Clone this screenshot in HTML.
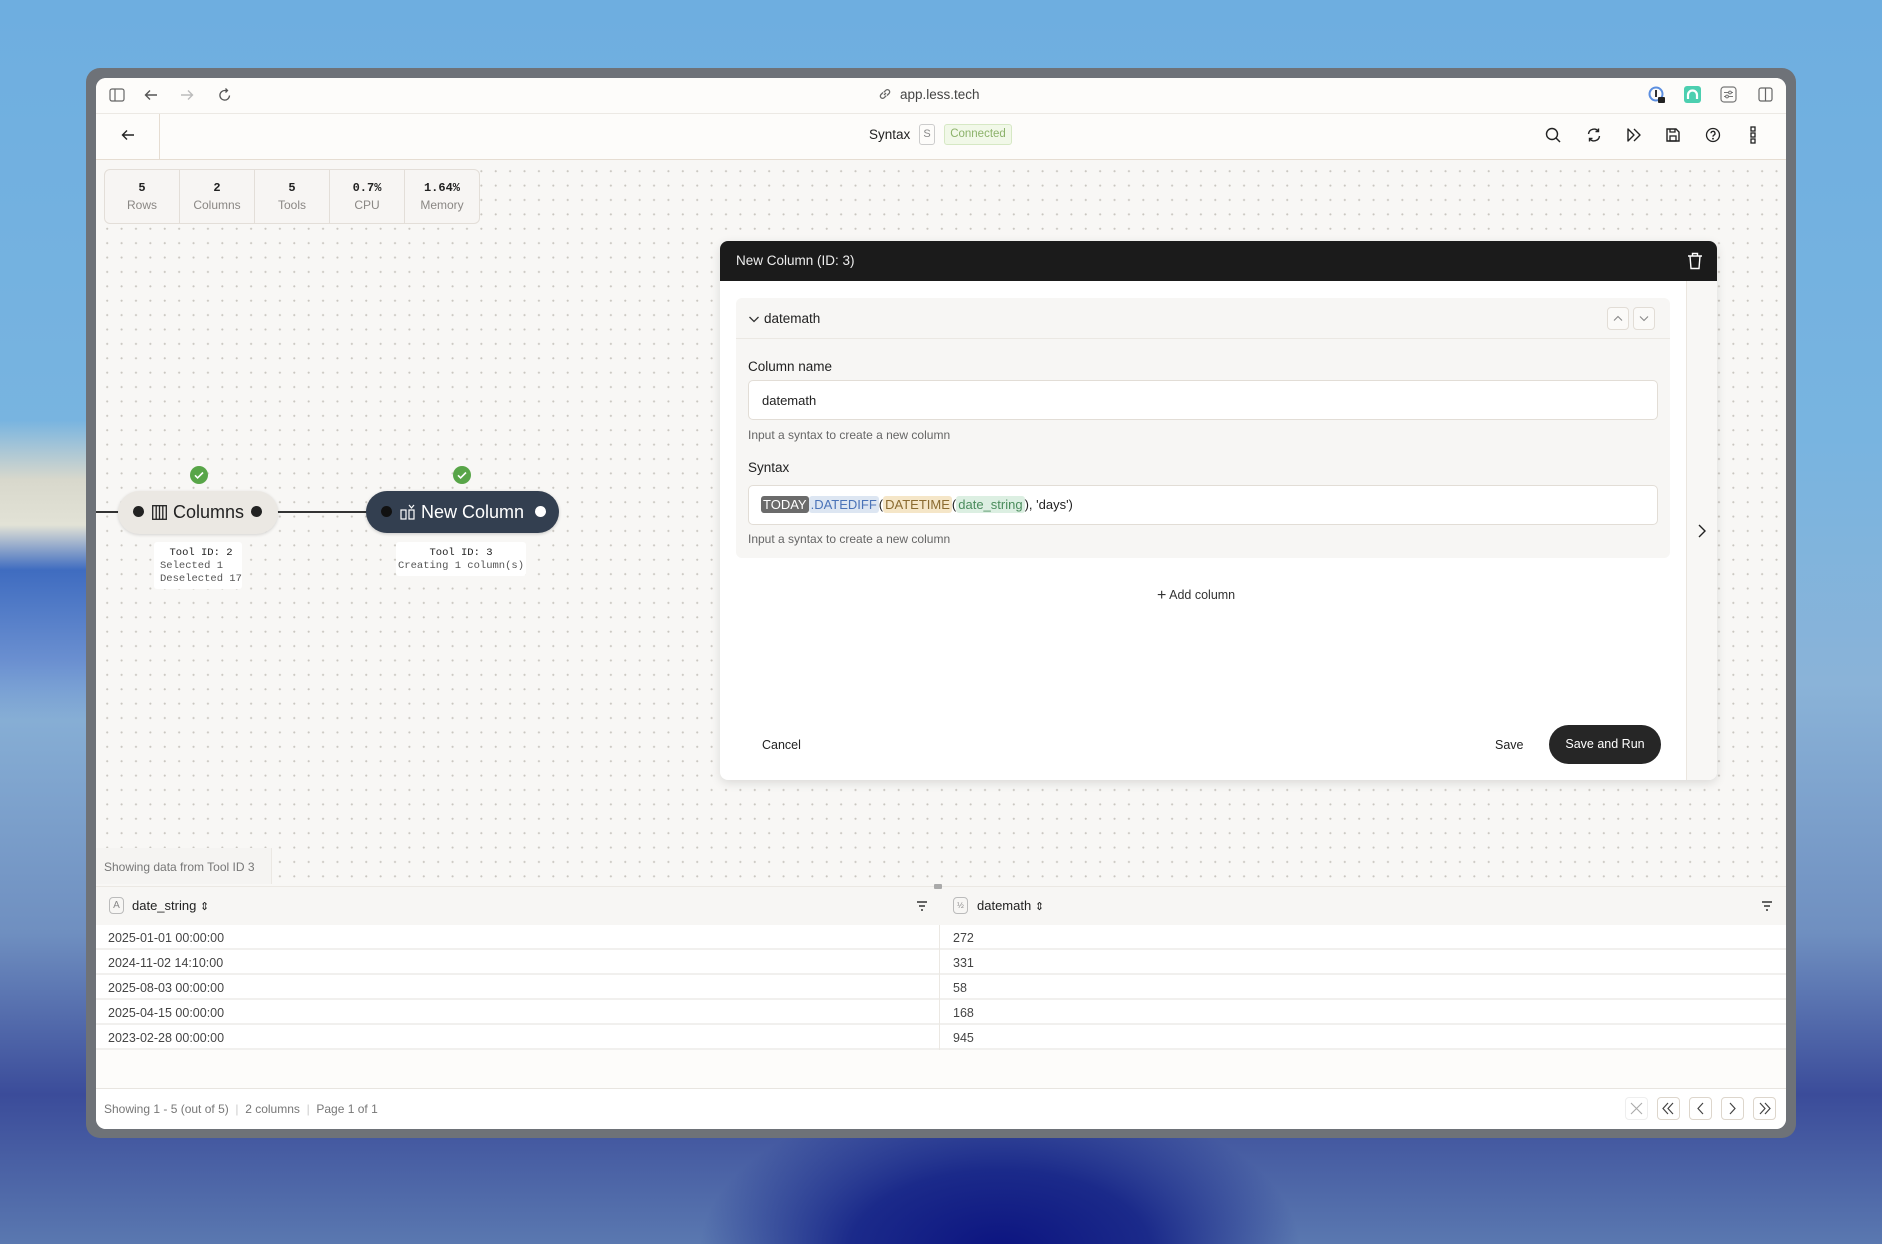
<!DOCTYPE html>
<html><head><meta charset="utf-8"><style>
*{box-sizing:border-box;margin:0;padding:0}
body{width:1882px;height:1244px;overflow:hidden;font-family:"Liberation Sans",sans-serif;position:relative;
background:linear-gradient(180deg,#6eaee0 0%,#78b4e0 35%,#8ab3d8 55%,#6f8fc0 75%,#3b4c9a 88%,#5a78b0 100%)}
.bgb{position:absolute;left:0;top:1100px;width:1882px;height:144px;background:radial-gradient(ellipse 300px 160px at 1000px 150px,#0c1480 0%,#1b2a8a 50%,rgba(80,110,170,0) 100%)}
.bgl{position:absolute;left:0;top:420px;width:100px;height:300px;background:linear-gradient(180deg,rgba(200,210,220,0) 0%,#d8d8cc 20%,#e2e2d6 35%,#3f6cc0 50%,#6a8fd0 80%,rgba(110,150,210,0) 100%)}
.frame{position:absolute;left:86px;top:68px;width:1710px;height:1070px;background:#6e7278;border-radius:14px}
.win{position:absolute;left:96px;top:78px;width:1690px;height:1051px;background:#fdfcfa;border-radius:10px;overflow:hidden}
.abs{position:absolute}
.canvas{position:absolute;left:0;top:82px;width:1690px;height:806px;background-color:#f8f7f5;
background-image:radial-gradient(circle,#c9c6c0 0.9px,transparent 1.2px);background-size:14.4px 14.4px;background-position:4px 4px}
.tb{border-bottom:1px solid #ece9e4}
svg{display:block}
.ic{position:absolute}
.stats{position:absolute;left:8px;top:91px;width:376px;height:55px;border:1px solid #e3ded8;border-radius:6px;background:#f7f5f3;display:flex}
.stats div{flex:1;border-right:1px solid #e3ded8;text-align:center;padding-top:11px}
.stats div:last-child{border-right:none}
.stats b{display:block;font-family:"Liberation Mono",monospace;font-size:12px;color:#222}
.stats span{display:block;font-size:12px;color:#8a8784;margin-top:3px}
.mono{font-family:"Liberation Mono",monospace}
.panel{position:absolute;left:624px;top:163px;width:997px;height:539px;background:#fff;border-radius:8px;box-shadow:0 3px 10px rgba(0,0,0,.12);overflow:hidden}
.inp{position:absolute;background:#fff;border:1px solid #e2ddd6;border-radius:5px;font-size:13px;color:#222}
.tok{padding:1px 2px;border-radius:3px}
.row{position:absolute;left:0;width:1690px;height:25px;border-bottom:2px solid #f1f0ee;background:#fff;font-size:12.5px;color:#444}
.row span{position:absolute;top:6px}
.pbtn{position:absolute;top:1019px;width:23px;height:23px;border:1px solid #ddd6cc;border-radius:4px;background:#fff}
</style></head><body>
<div class="bgl"></div><div class="bgb"></div>
<div class="frame"></div>
<div class="win">
  <div class="abs tb" style="left:0;top:0;width:1690px;height:36px;background:#fdfcfa"></div>
  <svg class="ic" style="left:13px;top:10px" width="16" height="14" viewBox="0 0 16 14"><rect x="1" y="1" width="14" height="12" rx="2" fill="none" stroke="#666" stroke-width="1.2"/><line x1="6" y1="1" x2="6" y2="13" stroke="#666" stroke-width="1.2"/></svg>
  <svg class="ic" style="left:48px;top:10px" width="14" height="14" viewBox="0 0 14 14"><path d="M13 7H2M6 2.5L1.5 7 6 11.5" fill="none" stroke="#555" stroke-width="1.4"/></svg>
  <svg class="ic" style="left:84px;top:10px" width="14" height="14" viewBox="0 0 14 14"><path d="M1 7h11M8 2.5L12.5 7 8 11.5" fill="none" stroke="#bbb" stroke-width="1.4"/></svg>
  <svg class="ic" style="left:122px;top:9px" width="14" height="16" viewBox="0 0 14 16"><path d="M11.5 8.5A4.8 4.8 0 1 1 7 3.5h2M7.5 1.5L9.5 3.5 7.5 5.5" fill="none" stroke="#555" stroke-width="1.3"/></svg>
  <svg class="ic" style="left:782px;top:9px" width="14" height="14" viewBox="0 0 14 14"><path d="M6 8l2-2M5 5.5L3 7.5a2.2 2.2 0 0 0 3.2 3.2L8.2 8.7M9 8.5l2-2a2.2 2.2 0 0 0-3.2-3.2L5.8 5.3" fill="none" stroke="#666" stroke-width="1.3"/></svg>
  <div class="abs" style="left:804px;top:9px;font-size:13.5px;color:#444">app.less.tech</div>
  <svg class="ic" style="left:1552px;top:8px" width="18" height="18" viewBox="0 0 18 18"><circle cx="8" cy="8" r="6.5" fill="none" stroke="#5c8fe0" stroke-width="2"/><rect x="7" y="4" width="2" height="7" fill="#333"/><rect x="10" y="11" width="7" height="6" rx="1" fill="#222"/></svg>
  <div class="abs" style="left:1588px;top:8px;width:17px;height:17px;background:#4ccfb0;border-radius:3px"><svg width="17" height="17" viewBox="0 0 17 17"><path d="M4 13V9a4.5 4.5 0 0 1 9 0v4" fill="none" stroke="#fff" stroke-width="2.2"/></svg></div>
  <svg class="ic" style="left:1624px;top:8px" width="17" height="17" viewBox="0 0 17 17"><rect x="1" y="1" width="15" height="15" rx="3" fill="none" stroke="#777" stroke-width="1.2"/><path d="M4 6.5h9M4 10.5h9" stroke="#777" stroke-width="1.1"/><circle cx="10" cy="6.5" r="1.4" fill="#fff" stroke="#777"/><circle cx="7" cy="10.5" r="1.4" fill="#fff" stroke="#777"/></svg>
  <svg class="ic" style="left:1662px;top:9px" width="15" height="15" viewBox="0 0 15 15"><rect x="1" y="1" width="13" height="13" rx="2" fill="none" stroke="#666" stroke-width="1.2"/><line x1="7.5" y1="1" x2="7.5" y2="14" stroke="#666" stroke-width="1.2"/></svg>
  <div class="abs" style="left:0;top:36px;width:1690px;height:46px;border-bottom:1px solid #e6ddd2;background:#fdfcfa"></div>
  <div class="abs" style="left:63px;top:36px;width:1px;height:46px;background:#e6ddd2"></div>
  <svg class="ic" style="left:25px;top:50px" width="14" height="14" viewBox="0 0 14 14"><path d="M13 7H2M6 2.5L1.5 7 6 11.5" fill="none" stroke="#222" stroke-width="1.4"/></svg>
  <div class="abs" style="left:773px;top:49px;font-size:13.5px;color:#222">Syntax</div>
  <div class="abs" style="left:823px;top:46px;width:16px;height:21px;border:1px solid #ccc;border-radius:3px;font-size:11px;color:#888;text-align:center;line-height:19px">S</div>
  <div class="abs" style="left:848px;top:46px;width:68px;height:21px;border:1px solid #d6e8c4;border-radius:3px;background:#f1f8e8;font-size:11.5px;color:#8cb26a;text-align:center;line-height:19px">Connected</div>
  <svg class="ic" style="left:1449px;top:49px" width="16" height="16" viewBox="0 0 16 16"><circle cx="7" cy="7" r="5.5" fill="none" stroke="#222" stroke-width="1.4"/><path d="M11 11l4 4" stroke="#222" stroke-width="1.5"/></svg>
  <svg class="ic" style="left:1490px;top:49px" width="16" height="16" viewBox="0 0 16 16"><path d="M2.5 7A5.5 5.5 0 0 1 12.5 4.5M13.5 9A5.5 5.5 0 0 1 3.5 11.5M12.5 1.5v3h-3M3.5 14.5v-3h3" fill="none" stroke="#222" stroke-width="1.4"/></svg>
  <svg class="ic" style="left:1530px;top:49px" width="16" height="16" viewBox="0 0 16 16"><path d="M2 2v12l6-6zM8 2l6 6-6 6" fill="none" stroke="#222" stroke-width="1.4" stroke-linejoin="round"/></svg>
  <svg class="ic" style="left:1569px;top:49px" width="16" height="16" viewBox="0 0 16 16"><path d="M2 2h9l3 3v9H2z" fill="none" stroke="#222" stroke-width="1.4"/><rect x="5" y="9" width="6" height="5" fill="none" stroke="#222" stroke-width="1.3"/><path d="M5 2v3h5V2" fill="none" stroke="#222" stroke-width="1.3"/></svg>
  <svg class="ic" style="left:1609px;top:49px" width="16" height="16" viewBox="0 0 16 16"><circle cx="8" cy="8" r="6.5" fill="none" stroke="#222" stroke-width="1.3"/><path d="M6 6.3a2 2 0 1 1 2.7 1.9C8 8.5 8 9 8 9.7" fill="none" stroke="#222" stroke-width="1.3"/><circle cx="8" cy="11.7" r=".9" fill="#222"/></svg>
  <svg class="ic" style="left:1654px;top:48px" width="6" height="18" viewBox="0 0 6 18"><rect x="1" y="1" width="4" height="4" fill="none" stroke="#222" stroke-width="1.3"/><rect x="1" y="7" width="4" height="4" fill="none" stroke="#222" stroke-width="1.3"/><rect x="1" y="13" width="4" height="4" fill="none" stroke="#222" stroke-width="1.3"/></svg>

  <div class="canvas"></div>
  <div class="stats"><div><b>5</b><span>Rows</span></div><div><b>2</b><span>Columns</span></div><div><b>5</b><span>Tools</span></div><div><b>0.7%</b><span>CPU</span></div><div><b>1.64%</b><span>Memory</span></div></div>

  <div class="abs" style="left:0;top:433px;width:290px;height:2px;background:#333"></div>
  <div class="abs" style="left:22px;top:413px;width:160px;height:43px;border-radius:22px;background:#ebe8e3;box-shadow:0 1px 3px rgba(0,0,0,.15)"></div>
  <div class="abs" style="left:37px;top:428px;width:11px;height:11px;border-radius:50%;background:#222"></div>
  <div class="abs" style="left:155px;top:428px;width:11px;height:11px;border-radius:50%;background:#222"></div>
  <svg class="ic" style="left:56px;top:427px" width="15" height="15" viewBox="0 0 15 15"><rect x=".7" y=".7" width="13.6" height="13.6" fill="none" stroke="#222" stroke-width="1.3"/><path d="M4.2 1v13M7.5 1v13M10.8 1v13" stroke="#222" stroke-width="1.3"/></svg>
  <div class="abs" style="left:77px;top:424px;font-size:18px;color:#222">Columns</div>
  <div class="abs" style="left:270px;top:413px;width:193px;height:42px;border-radius:21px;background:#333f50;box-shadow:0 1px 3px rgba(0,0,0,.2)"></div>
  <div class="abs" style="left:285px;top:428px;width:11px;height:11px;border-radius:50%;background:#111"></div>
  <div class="abs" style="left:439px;top:428px;width:11px;height:11px;border-radius:50%;background:#fff"></div>
  <svg class="ic" style="left:304px;top:426px" width="16" height="16" viewBox="0 0 16 16"><rect x="1" y="6" width="5" height="9" fill="none" stroke="#fff" stroke-width="1.2"/><rect x="9" y="6" width="5" height="9" fill="none" stroke="#fff" stroke-width="1.2"/><path d="M9 1l2.5 3L14 1" fill="none" stroke="#fff" stroke-width="1.2"/></svg>
  <div class="abs" style="left:325px;top:424px;font-size:18px;color:#fff">New Column</div>
  <div class="abs" style="left:94px;top:388px;width:18px;height:18px;border-radius:50%;background:#58a548"><svg width="18" height="18" viewBox="0 0 18 18"><path d="M5 9.3l2.6 2.6L13 6.5" fill="none" stroke="#fff" stroke-width="1.6"/></svg></div>
  <div class="abs" style="left:357px;top:388px;width:18px;height:18px;border-radius:50%;background:#58a548"><svg width="18" height="18" viewBox="0 0 18 18"><path d="M5 9.3l2.6 2.6L13 6.5" fill="none" stroke="#fff" stroke-width="1.6"/></svg></div>
  <div class="abs mono" style="left:58px;top:464px;width:88px;height:47px;background:#fff;border-radius:3px;font-size:10.5px;color:#555;line-height:13px;padding:5px 0 0 6px"><div style="text-align:center;color:#222">Tool ID: 2</div>Selected 1<br>Deselected 17</div>
  <div class="abs mono" style="left:300px;top:464px;width:130px;height:34px;background:#fff;border-radius:3px;font-size:10.5px;color:#555;line-height:13px;padding-top:5px;text-align:center"><div style="color:#222">Tool ID: 3</div>Creating 1 column(s)</div>

  <div class="panel">
    <div class="abs" style="left:0;top:0;width:997px;height:40px;background:#1b1b1b"></div>
    <div class="abs" style="left:16px;top:12px;font-size:13.5px;color:#eee">New Column (ID: 3)</div>
    <svg class="ic" style="left:967px;top:11px" width="16" height="18" viewBox="0 0 16 18"><path d="M1 4h14M5.5 4V1.5h5V4M3 4l1 12.5h8L13 4" fill="none" stroke="#fff" stroke-width="1.4"/></svg>
    <div class="abs" style="left:966px;top:40px;width:31px;height:499px;background:#f8f7f5;border-left:1px solid #ebe6df"></div>
    <svg class="ic" style="left:977px;top:282px" width="10" height="16" viewBox="0 0 10 16"><path d="M2 2l6 6-6 6" fill="none" stroke="#222" stroke-width="1.4"/></svg>
    <div class="abs" style="left:16px;top:57px;width:934px;height:260px;background:#f7f6f4;border-radius:6px"></div>
    <div class="abs" style="left:16px;top:97px;width:934px;height:1px;background:#ebe8e3"></div>
    <svg class="ic" style="left:28px;top:73px" width="12" height="10" viewBox="0 0 12 10"><path d="M1.5 3l4.5 4.5L10.5 3" fill="none" stroke="#333" stroke-width="1.3"/></svg>
    <div class="abs" style="left:44px;top:70px;font-size:13.5px;color:#222">datemath</div>
    <div class="abs" style="left:887px;top:66px;width:22px;height:23px;border:1px solid #e2ddd6;border-radius:4px;background:#fbfaf8"><svg width="20" height="21" viewBox="0 0 20 21"><path d="M6 12.5l4-4 4 4" fill="none" stroke="#888" stroke-width="1.1"/></svg></div>
    <div class="abs" style="left:913px;top:66px;width:22px;height:23px;border:1px solid #e2ddd6;border-radius:4px;background:#fbfaf8"><svg width="20" height="21" viewBox="0 0 20 21"><path d="M6 8.5l4 4 4-4" fill="none" stroke="#888" stroke-width="1.1"/></svg></div>
    <div class="abs" style="left:28px;top:118px;font-size:13.5px;color:#222">Column name</div>
    <div class="inp" style="left:28px;top:139px;width:910px;height:40px;padding:12px 0 0 13px">datemath</div>
    <div class="abs" style="left:28px;top:187px;font-size:12px;color:#666">Input a syntax to create a new column</div>
    <div class="abs" style="left:28px;top:219px;font-size:13.5px;color:#222">Syntax</div>
    <div class="inp" style="left:28px;top:244px;width:910px;height:40px;padding:11px 0 0 12px;font-size:13px"><span class="tok" style="background:#6b6b6b;color:#fff">TODAY</span><span class="tok" style="background:#dde6f2;color:#4a73b8">.DATEDIFF</span>(<span class="tok" style="background:#f5e6c8;color:#8a6a30">DATETIME</span>(<span class="tok" style="background:#dcefe2;color:#4a8c5c">date_string</span>), 'days')</div>
    <div class="abs" style="left:28px;top:291px;font-size:12px;color:#666">Input a syntax to create a new column</div>
    <div class="abs" style="left:437px;top:345px;font-size:12.5px;color:#333"><span style="font-size:16px;position:relative;top:1px">+</span> Add column</div>
    <div class="abs" style="left:42px;top:497px;font-size:12.5px;color:#222">Cancel</div>
    <div class="abs" style="left:775px;top:497px;font-size:12.5px;color:#222">Save</div>
    <div class="abs" style="left:829px;top:484px;width:112px;height:39px;border-radius:20px;background:#262626;color:#fff;font-size:12.5px;text-align:center;line-height:39px">Save and Run</div>
  </div>

  <div class="abs" style="left:0;top:770px;width:176px;height:36px;background:#f5f4f2;border-right:1px solid #ebe8e3;font-size:12px;color:#777;padding:12px 0 0 8px">Showing data from Tool ID 3</div>
  <div class="abs" style="left:0;top:808px;width:1690px;height:39px;background:#f7f6f4;border-top:1px solid #ebe8e3"></div>
  <div class="abs" style="left:838px;top:806px;width:8px;height:5px;background:#aaa;border-radius:1px"></div>
  <div class="abs" style="left:13px;top:819px;width:15px;height:17px;border:1px solid #bbb;border-radius:4px;font-size:10px;color:#888;text-align:center;line-height:15px">A</div>
  <div class="abs" style="left:36px;top:820px;font-size:13px;color:#222">date_string <span style="font-size:11px">⇕</span></div>
  <svg class="ic" style="left:820px;top:823px" width="12" height="10" viewBox="0 0 12 10"><path d="M1 1h10M3 5h6M5 9h2" stroke="#333" stroke-width="1.5"/></svg>
  <div class="abs" style="left:857px;top:819px;width:15px;height:17px;border:1px solid #bbb;border-radius:4px;font-size:8px;color:#888;text-align:center;line-height:15px">½</div>
  <div class="abs" style="left:881px;top:820px;font-size:13px;color:#222">datemath <span style="font-size:11px">⇕</span></div>
  <svg class="ic" style="left:1665px;top:823px" width="12" height="10" viewBox="0 0 12 10"><path d="M1 1h10M3 5h6M5 9h2" stroke="#333" stroke-width="1.5"/></svg>
  <div class="row" style="top:847px"><span style="left:12px">2025-01-01 00:00:00</span><span style="left:857px">272</span></div>
  <div class="row" style="top:872px"><span style="left:12px">2024-11-02 14:10:00</span><span style="left:857px">331</span></div>
  <div class="row" style="top:897px"><span style="left:12px">2025-08-03 00:00:00</span><span style="left:857px">58</span></div>
  <div class="row" style="top:922px"><span style="left:12px">2025-04-15 00:00:00</span><span style="left:857px">168</span></div>
  <div class="row" style="top:947px"><span style="left:12px">2023-02-28 00:00:00</span><span style="left:857px">945</span></div>
  <div class="abs" style="left:843px;top:847px;width:1px;height:125px;background:#ebe8e3"></div>
  <div class="abs" style="left:0;top:1010px;width:1690px;height:41px;background:#fff;border-top:1px solid #e8e5e0"></div>
  <div class="abs" style="left:8px;top:1024px;font-size:12px;color:#777">Showing 1 - 5 (out of 5) <span style="color:#ccc">&nbsp;|&nbsp;</span> 2 columns <span style="color:#ccc">&nbsp;|&nbsp;</span> Page 1 of 1</div>
  <div class="pbtn" style="left:1529px;border-color:#eee"><svg width="21" height="21" viewBox="0 0 21 21"><path d="M5 5l11 11M16 5L5 16" stroke="#aaa" stroke-width="1.1"/></svg></div>
  <div class="pbtn" style="left:1561px"><svg width="21" height="21" viewBox="0 0 21 21"><path d="M10 5l-5 5.5 5 5.5M15 5l-5 5.5 5 5.5" fill="none" stroke="#444" stroke-width="1.2"/></svg></div>
  <div class="pbtn" style="left:1593px"><svg width="21" height="21" viewBox="0 0 21 21"><path d="M13 5l-5 5.5 5 5.5" fill="none" stroke="#444" stroke-width="1.2"/></svg></div>
  <div class="pbtn" style="left:1625px"><svg width="21" height="21" viewBox="0 0 21 21"><path d="M8 5l5 5.5-5 5.5" fill="none" stroke="#444" stroke-width="1.2"/></svg></div>
  <div class="pbtn" style="left:1657px"><svg width="21" height="21" viewBox="0 0 21 21"><path d="M6 5l5 5.5-5 5.5M11 5l5 5.5-5 5.5" fill="none" stroke="#444" stroke-width="1.2"/></svg></div>
</div>
</body></html>
